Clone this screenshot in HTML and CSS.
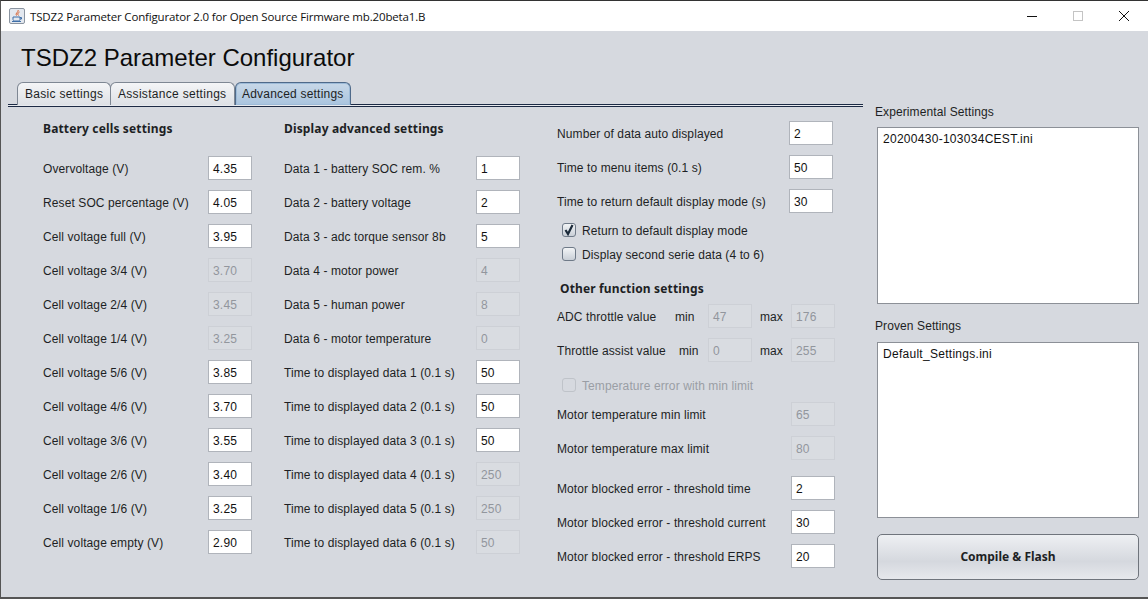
FILE: index.html
```html
<!DOCTYPE html>
<html lang="en">
<head>
    <meta charset="UTF-8">
    <meta name="viewport" content="width=device-width, initial-scale=1.0">
    <title>TSDZ2 Parameter Configurator</title>
    <link rel="stylesheet" href="styles.css">
</head>
<body>

<div class="window">
    <div class="titlebar">
        <svg class="app-icon" width="16" height="16" viewBox="0 0 16 16">
            <rect x="0.5" y="0.5" width="15" height="15" rx="1.5" fill="#e3e8ef" stroke="#8a94a0"/>
            <path d="M9 2c1 2-3 3-1.500 5.500M10.500 4c-1.500 1-2.500 2-1 3.500" fill="none" stroke="#d9541e" stroke-width="1"/>
            <path d="M4 9h7v2.500c0 1-1 1.500-2 1.500H6c-1 0-2-.5-2-1.500z" fill="none" stroke="#3f6fa8" stroke-width="1"/>
            <path d="M11 9.500h1.500v1.500H11M3 13.500h9" fill="none" stroke="#3f6fa8" stroke-width="1"/>
        </svg>
        <span class="title-text">TSDZ2 Parameter Configurator 2.0 for Open Source Firmware mb.20beta1.B</span>
        <div class="win-buttons">
            <svg width="12" height="12" viewBox="0 0 12 12"><path d="M1 6.500h10" stroke="#111" stroke-width="1"/></svg>
            <svg width="12" height="12" viewBox="0 0 12 12"><rect x="1.500" y="1.500" width="9" height="9" fill="none" stroke="#c4c4c4"/></svg>
            <svg width="12" height="12" viewBox="0 0 12 12"><path d="M1 1l10 10M11 1L1 11" stroke="#111" stroke-width="1" fill="none"/></svg>
        </div>
    </div>

    <div class="content">
        <div class="left">
            <h1>TSDZ2 Parameter Configurator</h1>
            <div class="tabs">
                <div class="tab tab-basic">Basic settings</div>
                <div class="tab tab-assist">Assistance settings</div>
                <div class="tab tab-active">Advanced settings</div>
            </div>
            <div class="tabline"></div>

            <div class="columns">
                <div class="col col-a">
                    <div class="heading">Battery cells settings</div>
                    <div class="row"><span>Overvoltage (V)</span><div class="field">4.35</div></div>
                    <div class="row"><span>Reset SOC percentage (V)</span><div class="field">4.05</div></div>
                    <div class="row"><span>Cell voltage full (V)</span><div class="field">3.95</div></div>
                    <div class="row"><span>Cell voltage 3/4 (V)</span><div class="field off">3.70</div></div>
                    <div class="row"><span>Cell voltage 2/4 (V)</span><div class="field off">3.45</div></div>
                    <div class="row"><span>Cell voltage 1/4 (V)</span><div class="field off">3.25</div></div>
                    <div class="row"><span>Cell voltage 5/6 (V)</span><div class="field">3.85</div></div>
                    <div class="row"><span>Cell voltage 4/6 (V)</span><div class="field">3.70</div></div>
                    <div class="row"><span>Cell voltage 3/6 (V)</span><div class="field">3.55</div></div>
                    <div class="row"><span>Cell voltage 2/6 (V)</span><div class="field">3.40</div></div>
                    <div class="row"><span>Cell voltage 1/6 (V)</span><div class="field">3.25</div></div>
                    <div class="row"><span>Cell voltage empty (V)</span><div class="field">2.90</div></div>
                </div>

                <div class="col col-b">
                    <div class="heading">Display advanced settings</div>
                    <div class="row"><span>Data 1 - battery SOC rem. %</span><div class="field">1</div></div>
                    <div class="row"><span>Data 2 - battery voltage</span><div class="field">2</div></div>
                    <div class="row"><span>Data 3 - adc torque sensor 8b</span><div class="field">5</div></div>
                    <div class="row"><span>Data 4 - motor power</span><div class="field off">4</div></div>
                    <div class="row"><span>Data 5 - human power</span><div class="field off">8</div></div>
                    <div class="row"><span>Data 6 - motor temperature</span><div class="field off">0</div></div>
                    <div class="row"><span>Time to displayed data 1 (0.1 s)</span><div class="field">50</div></div>
                    <div class="row"><span>Time to displayed data 2 (0.1 s)</span><div class="field">50</div></div>
                    <div class="row"><span>Time to displayed data 3 (0.1 s)</span><div class="field">50</div></div>
                    <div class="row"><span>Time to displayed data 4 (0.1 s)</span><div class="field off">250</div></div>
                    <div class="row"><span>Time to displayed data 5 (0.1 s)</span><div class="field off">250</div></div>
                    <div class="row"><span>Time to displayed data 6 (0.1 s)</span><div class="field off">50</div></div>
                </div>

                <div class="col col-c">
                    <div class="row narrow"><span>Number of data auto displayed</span><div class="field">2</div></div>
                    <div class="row narrow"><span>Time to menu items (0.1 s)</span><div class="field">50</div></div>
                    <div class="row narrow"><span>Time to return default display mode (s)</span><div class="field">30</div></div>
                    <div class="check">
                        <div class="box">
                            <svg width="12" height="12" viewBox="0 0 12 12"><path d="M2.500 6l2.500 4L9.500 1" fill="none" stroke="#1b2a3a" stroke-width="2.200"/></svg>
                        </div>
                        <span>Return to default display mode</span>
                    </div>
                    <div class="check">
                        <div class="box"></div>
                        <span>Display second serie data (4 to 6)</span>
                    </div>
                    <div class="subheading">Other function settings</div>
                    <div class="row range">
                        <span class="range-label">ADC throttle value</span>
                        <span class="min-adc">min</span><div class="field off">47</div>
                        <span class="max-label">max</span><div class="field off">176</div>
                    </div>
                    <div class="row range">
                        <span class="range-label">Throttle assist value</span>
                        <span class="min-thr">min</span><div class="field off">0</div>
                        <span class="max-label">max</span><div class="field off">255</div>
                    </div>
                    <div class="check check-off">
                        <div class="box"></div>
                        <span>Temperature error with min limit</span>
                    </div>
                    <div class="row"><span>Motor temperature min limit</span><div class="field off">65</div></div>
                    <div class="row"><span>Motor temperature max limit</span><div class="field off">80</div></div>
                    <div class="row first-blocked"><span>Motor blocked error - threshold time</span><div class="field">2</div></div>
                    <div class="row"><span>Motor blocked error - threshold current</span><div class="field">30</div></div>
                    <div class="row"><span>Motor blocked error - threshold ERPS</span><div class="field">20</div></div>
                </div>
            </div>
        </div>

        <div class="right">
            <div class="list-label">Experimental Settings</div>
            <div class="list">20200430-103034CEST.ini</div>
            <div class="list-label proven">Proven Settings</div>
            <div class="list list-proven">Default_Settings.ini</div>
            <div class="flash-btn">Compile &amp; Flash</div>
        </div>
    </div>
</div>

</body>
</html>
```

FILE: styles.css
```css
html, body {
    margin: 0;
    padding: 0;
}
body {
    width: 1148px;
    height: 599px;
    overflow: hidden;
    font-family: "Liberation Sans", Arial, sans-serif;
    font-size: 12px;
    letter-spacing: 0.1px;
    color: #1d1f24;
    background-color: #d6d9df;
}
.window {
    box-sizing: border-box;
    height: 599px;
    display: flex;
    flex-direction: column;
    border-left: 1px solid #555;
    border-top: 1px solid #333;
    border-bottom: 2px solid #555;
}

/* title bar */
.titlebar {
    height: 30px;
    flex: none;
    background-color: #fff;
    display: flex;
    align-items: center;
    padding-left: 8px;
}
.app-icon {
    margin-right: 5px;
}
.title-text {
    color: #111;
    font-size: 11.5px;
    font-family: "Open Sans", sans-serif;
    letter-spacing: -0.16px;
}
.win-buttons {
    margin-left: auto;
    display: flex;
    gap: 34px;
    padding-right: 18px;
}

.content {
    flex: 1;
    display: flex;
}
.left {
    width: 862px;
    flex: none;
}
h1 {
    margin: 0;
    height: 51px;
    box-sizing: border-box;
    padding: 12px 0 0 20px;
    font-size: 24px;
    line-height: 29px;
    font-weight: normal;
    letter-spacing: 0;
    color: #0b0b0b;
}

/* tabs */
.tabs {
    display: flex;
    height: 22px;
    padding-left: 16px;
}
.tab {
    box-sizing: border-box;
    height: 23px;
    padding: 4px 0 0 7px;
    border: 1px solid #7e8793;
    border-bottom: none;
    border-radius: 6px 6px 0 0;
    line-height: 15px;
    letter-spacing: 0.3px;
    white-space: nowrap;
    margin-right: -1px;
    background: linear-gradient(#f4f5f7, #dde0e5);
}
.tab-basic {
    width: 94px;
}
.tab-assist {
    width: 125px;
}
.tab-active {
    width: 116px;
    margin-left: 1px;
    padding-left: 6px;
    letter-spacing: 0.2px;
    border-color: #4f6a8a;
    box-shadow: inset 0 0 0 1px #9dbbd8;
    background: linear-gradient(#c8d8e8, #a9c4de);
}
.tabline {
    margin-left: 7px;
    height: 1px;
    border-top: 1px solid #1c2a44;
    border-bottom: 1px solid #1c2a44;
    background-color: #e8eaee;
}

/* settings columns */
.columns {
    display: flex;
    padding-left: 42px;
}
.col-a {
    width: 241px;
}
.col-a .row {
    width: 209px;
}
.col-b {
    width: 273px;
}
.col-b .row {
    width: 236px;
}
.col-c {
    width: 278px;
    padding-top: 9px;
}
.heading {
    height: 44px;
    padding-top: 14px;
    box-sizing: border-box;
    font-family: "Noto Sans", sans-serif;
    font-weight: bold;
    font-size: 12px;
    line-height: 16px;
    letter-spacing: 0.15px;
}
.subheading {
    height: 33px;
    padding: 15px 0 0 3px;
    box-sizing: border-box;
    font-family: "Noto Sans", sans-serif;
    font-weight: bold;
    font-size: 12px;
    line-height: 16px;
    letter-spacing: 0.15px;
}
.row {
    height: 34px;
    display: flex;
    align-items: center;
    justify-content: space-between;
    line-height: 16px;
}
.row > span {
    padding-top: 2px;
}
.row.narrow {
    width: 276px;
}
.field {
    box-sizing: border-box;
    width: 44px;
    height: 24px;
    padding: 1px 0 0 4px;
    line-height: 22px;
    border: 1px solid #b0b4bb;
    background-color: #fff;
    color: #111;
    letter-spacing: 0.2px;
}
.field.off {
    background-color: #d9dce1;
    border-color: #cdd0d6;
    color: #92969d;
}

/* min / max rows */
.range {
    justify-content: flex-start;
}
.range-label {
    width: 118px;
}
.min-adc {
    width: 33px;
}
.min-thr {
    padding-left: 4px;
    width: 29px;
}
.max-label {
    margin-left: 8px;
    width: 31px;
}

/* check boxes */
.check {
    height: 24px;
    display: flex;
    align-items: center;
    padding-left: 5px;
    gap: 6px;
    line-height: 16px;
}
.check > span {
    padding-top: 2px;
}
.box {
    box-sizing: border-box;
    width: 14px;
    height: 14px;
    border: 1px solid #6f7a88;
    border-radius: 3px;
    background: linear-gradient(#f2f4f6, #c9cfd7);
    display: flex;
    align-items: center;
    justify-content: center;
}
.check-off {
    height: 30px;
    padding-top: 6px;
    box-sizing: border-box;
    color: #9a9ea5;
}
.check-off .box {
    border-color: #bfc3c9;
    background: #d6d9df;
}
.first-blocked {
    margin-top: 6px;
}

/* right side */
.right {
    width: 262px;
    flex: none;
    margin-left: 14px;
    padding-top: 73px;
}
.list-label {
    margin-left: -2px;
    height: 16px;
    line-height: 16px;
    margin-bottom: 7px;
}
.list-label.proven {
    margin-top: 14px;
    margin-bottom: 8px;
}
.list {
    box-sizing: border-box;
    height: 177px;
    padding: 4px 5px;
    border: 1px solid #8c9097;
    background-color: #fff;
    color: #111;
    line-height: 14px;
    letter-spacing: 0.28px;
}
.list-proven {
    height: 176px;
}
.flash-btn {
    box-sizing: border-box;
    margin-top: 16px;
    height: 46px;
    padding-bottom: 1px;
    border: 1px solid #6f747c;
    border-radius: 5px;
    background: linear-gradient(#eef0f3, #d5d8de 60%, #e6e8ec);
    font-family: "Noto Sans", sans-serif;
    font-weight: bold;
    font-size: 12px;
    letter-spacing: 0;
    display: flex;
    align-items: center;
    justify-content: center;
}
```
